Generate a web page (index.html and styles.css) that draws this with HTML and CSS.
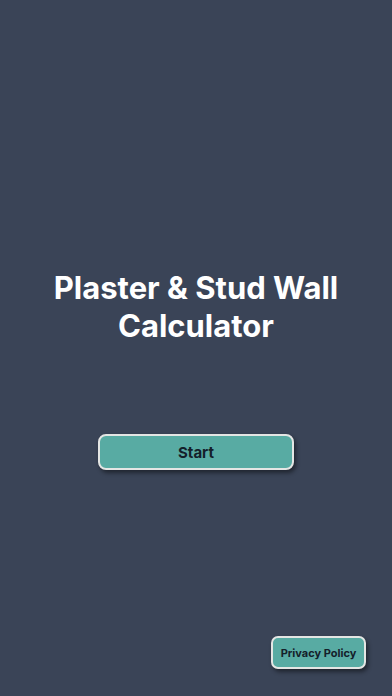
FILE: index.html
```html
<!DOCTYPE html>
<html lang="en">
<head>
<meta charset="UTF-8" />
<meta name="viewport" content="width=device-width, initial-scale=1" />
<title>Plaster &amp; Stud Wall Calculator</title>
<link rel="stylesheet" href="styles.css">
</head>
<body>
<main class="home">
  <h1 class="home__title">Plaster &amp; Stud Wall<br/>Calculator</h1>
  <button type="button" class="button btn-start">Start</button>
  <button type="button" class="button btn-privacy">Privacy Policy</button>
</main>
</body>
</html>
```

FILE: styles.css
```css
  body {
    font-family: Inter, 'Liberation Sans', sans-serif;
    background: #3a4457;
    color: #fff;
    margin: 0;
    padding: 0;
  }
  main.home {
    height: 100vh;
    box-sizing: border-box;
    display: flex;
    flex-direction: column;
    align-items: center;
    padding: 269px 26px 27px;
  }
  h1.home__title {
    margin: 0;
    font-size: 31px;
    line-height: 38px;
    font-weight: 700;
    text-align: center;
  }
  button.button {
    background: #58aba3;
    border: 2px solid #e4e6e4;
    color: #14202a;
    font-family: inherit;
    font-weight: 700;
    cursor: pointer;
    box-shadow: 2px 3px 4px rgba(0,0,0,0.45);
  }
  button.btn-start {
    margin-top: 89px;
    width: 196px;
    height: 36px;
    border-radius: 8px;
    font-size: 15px;
  }
  button.btn-privacy {
    margin-top: auto;
    align-self: flex-end;
    width: 95px;
    height: 33px;
    border-radius: 7px;
    font-size: 11px;
    padding: 0;
  }
```
